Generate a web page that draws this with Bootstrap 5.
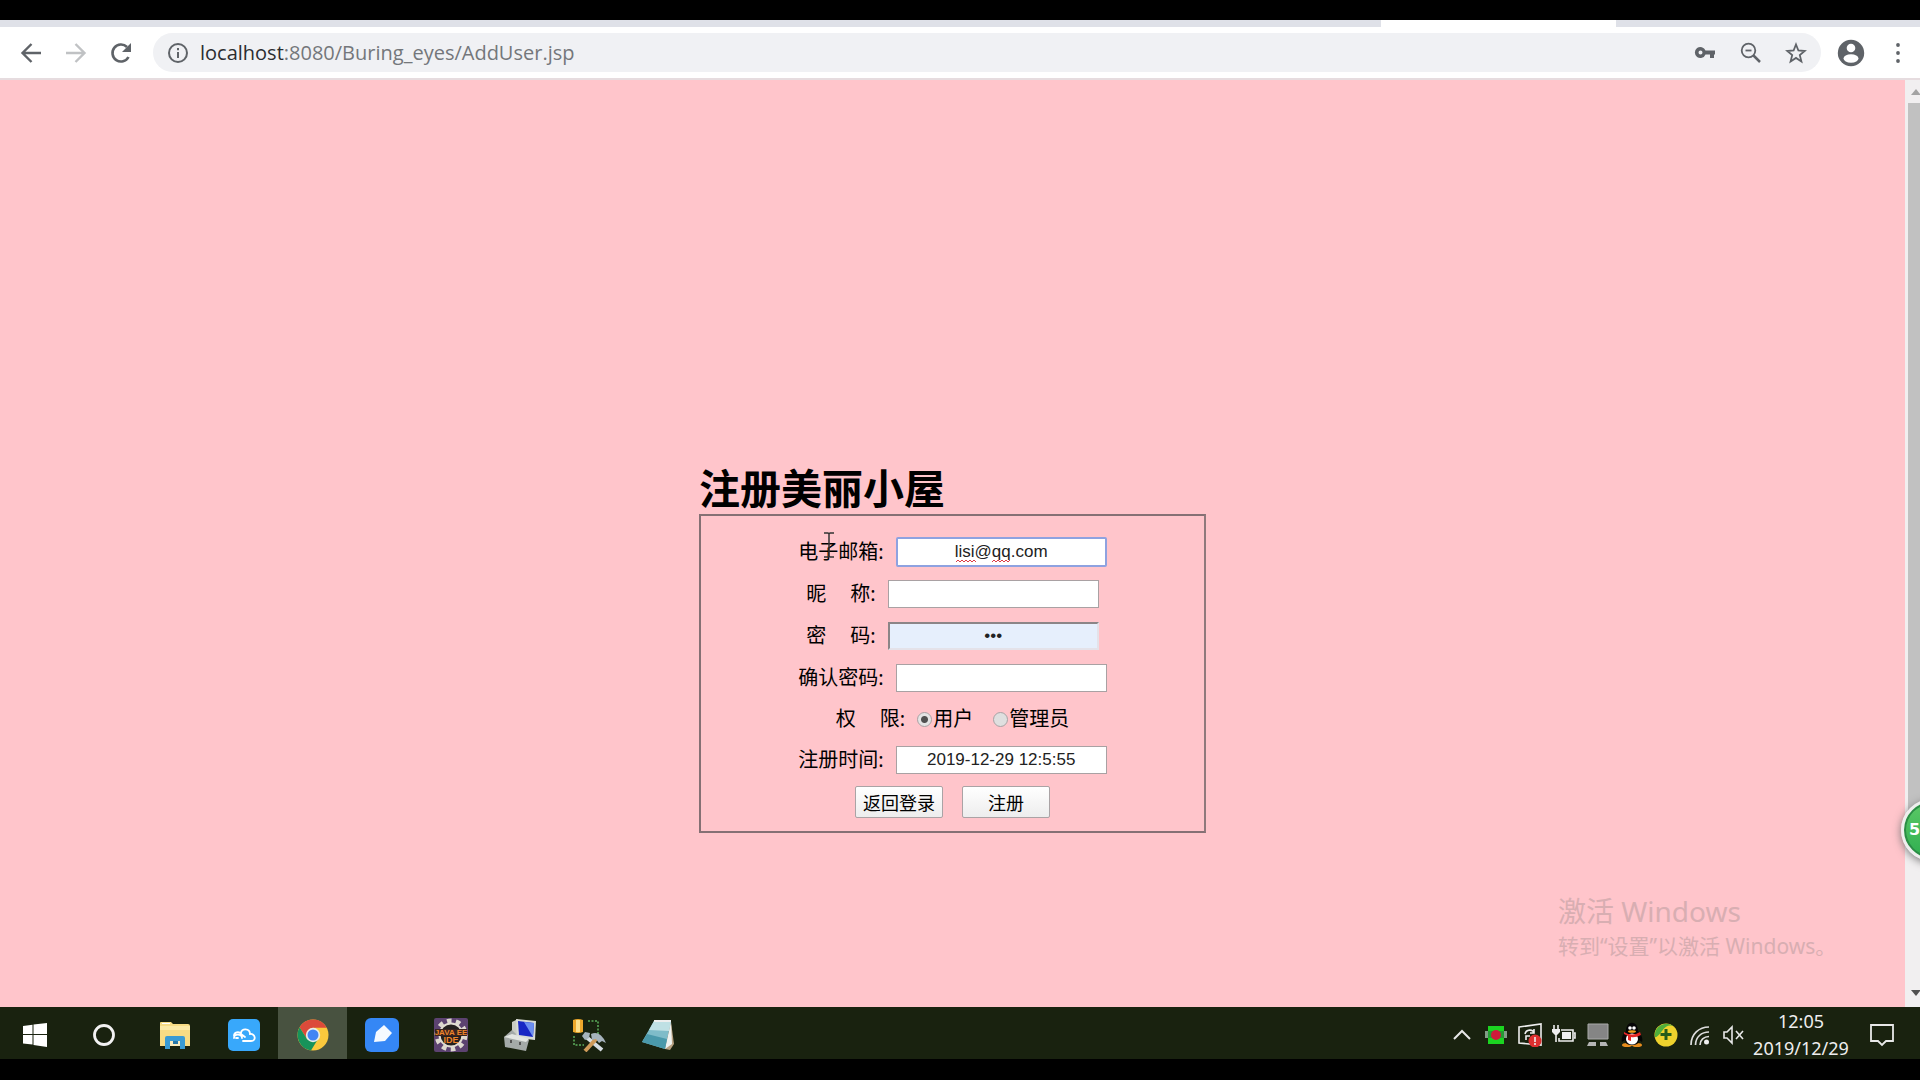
<!DOCTYPE html>
<html lang="zh-CN">
<head>
<meta charset="utf-8">
<meta name="viewport" content="width=device-width, initial-scale=1">
<title>注册美丽小屋</title>
<link href="https://cdn.jsdelivr.net/npm/bootstrap@5.3.0/dist/css/bootstrap.min.css" rel="stylesheet">
<style>
  body { background: #000; color: #000; font-family: "Liberation Sans", "Noto Sans CJK SC", sans-serif; padding: 20px 0 21px; overflow: hidden; }
  button { font-family: inherit; }
  svg { display: block; flex: none; }

  /* browser chrome */
  .tabstrip { height: 7px; background: #dfe1e8; padding-right: 304px; }
  .tab-active { width: 235px; background: #fff; }
  .toolbar { height: 53px; background: #fff; border-bottom: 2px solid #e6dcdf; padding: 0 17px 0 20px; }
  .tool { border: 0; background: none; padding: 0; color: #5f6368; }
  .nav-tools { gap: 23px; width: 133px; }
  .omnibox { height: 39px; background: #f0f1f4; border-radius: 20px; padding: 0 14px 0 15px; color: #5f6368; }
  .url { font: 20px/30px "Open Sans", "Noto Sans", sans-serif; color: #74777b; text-decoration: none; margin-left: 12px; }
  .url span { color: #2b2d30; }
  .url-tools { gap: 23px; }
  .menu-tool { margin-left: 22px; }

  /* page */
  .page-area { background: #ffc5cb; position: relative; }
  .signup { width: 507px; padding-bottom: 174px; margin-left: 699px; }
  .signup h1 { font: bold 41px/56px "Noto Sans CJK SC", sans-serif; margin: 0; }
  .frame { border: 2px solid; border-color: #857074 #8f797c #857074 #857074; padding: 15px 0 8px; }
  .line { height: 42px; font-size: 20px; line-height: 30px; font-family: "Noto Sans", "Noto Sans CJK SC", sans-serif; }
  .line.is-short { height: 40px; }
  .line > label, .line > .caption { margin-right: 12px; }
  .line > .choice { margin: 0 20px 0 1px; }
  .line > .choice:last-child { margin-right: 0; }
  .spread { display: inline-block; margin-right: 24px; }
  .line input[type=text], .line input[type=password] { width: 211px; height: 28px; border: 1px solid #a9a1a3; background: #fff; padding: 0 4px; font: 17px/20px "Liberation Sans", sans-serif; text-align: center; outline: 0; color: #222; }
  .line input.is-active { height: 30px; border: 2px solid #8ea2e0; border-radius: 2px; }
  .line input.is-filled { background: #e6effc; border: 2px solid; border-color: #8b8587 #e4e2e9 #e4e2e9 #8b8587; }
  .line input[type=radio] { appearance: none; width: 15px; height: 15px; margin: 0; border: 1px solid #a8a2a4; border-radius: 50%; background: #dfdfdf; }
  .line input[type=radio]:checked { background: radial-gradient(circle, #505050 0 3px, #e4e4e4 4px); }
  .squiggle { position: absolute; left: 60px; top: 22px; }
  .pushes { gap: 19px; }
  .push { width: 88px; height: 32px; border: 1px solid #aaa3a5; border-radius: 2px; background: linear-gradient(#fff, #ededed); font: 18px/24px "Noto Sans CJK SC", sans-serif; padding: 0; color: #000; }
  .ibeam { position: absolute; left: 822px; top: 452px; }
  .watermark { position: absolute; right: 64px; bottom: 46px; width: 298px; color: #d8aeb2; font-family: "Noto Sans", "Noto Sans CJK SC", sans-serif; }
  .watermark .big { font-size: 28px; line-height: 40px; }
  .watermark .sub { font-size: 21px; line-height: 30px; }

  .scroller { width: 15px; background: #f1eff0; }
  .thumb { height: 724px; margin: 4px 0 0 3px; background: #c1c1c1; }
  .down-arrow { margin-top: 162px; }
  .bubble { position: absolute; right: -43px; top: 719px; width: 62px; height: 62px; border-radius: 50%; border: 3px solid #eee; background: linear-gradient(#5bc966, #2fae50); box-shadow: 0 2px 8px #777, inset 0 0 0 2px #2b8c46; color: #fff; font: bold 16px/56px "DejaVu Sans", sans-serif; padding-left: 5px; }
  .clip { position: absolute; inset: 0; overflow: hidden; pointer-events: none; }

  /* task bar */
  .taskbar { height: 52px; background: #19220f; color: #eee; padding-left: 2px; }
  .slot { width: 69px; height: 52px; border: 0; background: none; padding: 4px 0 0; color: #fff; }
  .slot.is-open { background: #485240; }
  .tray { width: 34px; height: 52px; border: 0; background: none; padding: 4px 0 0; color: #e8e8e8; }
  .clock { width: 100px; padding-top: 4px; font: 18px/27px "Noto Sans", sans-serif; text-align: center; }
  .notify { width: 62px; margin-right: 7px; }
</style>
<script src="https://cdn.jsdelivr.net/npm/bootstrap@5.3.0/dist/js/bootstrap.bundle.min.js"></script>
</head>
<body class="d-flex flex-column vh-100">

<header>
  <div class="tabstrip d-flex justify-content-end"><div class="tab-active"></div></div>
  <div class="toolbar d-flex align-items-center">
    <div class="nav-tools d-flex align-items-center">
      <button class="tool" aria-label="后退"><svg width="22" height="22" viewBox="0 0 22 22" fill="none" stroke="currentColor" stroke-width="2.4"><path d="M21 11H3M11.500 2L2.500 11l9 9"/></svg></button>
      <button class="tool" aria-label="前进"><svg width="22" height="22" viewBox="0 0 22 22" fill="none" stroke="#c0c2c4" stroke-width="2.4"><path d="M1 11h18M10.500 2l9 9-9 9"/></svg></button>
      <button class="tool" aria-label="重新加载"><svg width="22" height="22" viewBox="0 0 22 22"><path d="M18.500 15A8.500 8.500 0 1 1 17 5" fill="none" stroke="currentColor" stroke-width="2.6"/><path d="M21 1v9h-9z" fill="currentColor"/></svg></button>
    </div>
    <div class="omnibox d-flex align-items-center flex-grow-1">
      <svg width="20" height="20" viewBox="0 0 20 20" fill="none" stroke="currentColor" stroke-width="2"><circle cx="10" cy="10" r="9"/><path d="M10 9v6M10 5v2.200"/></svg>
      <a class="url" href="#"><span>localhost</span>:8080/Buring_eyes/AddUser.jsp</a>
      <div class="url-tools d-flex align-items-center ms-auto">
        <button class="tool" aria-label="密码"><svg width="24" height="24" viewBox="0 0 24 24"><path d="M12.500 9.500a5.500 5.500 0 1 0 0 4H17V17h4v-3.500h1v-4zM7.500 13.500a2 2 0 1 1 0-4 2 2 0 0 1 0 4z" fill="currentColor"/></svg></button>
        <button class="tool" aria-label="缩放"><svg width="22" height="22" viewBox="0 0 22 22" fill="none" stroke="currentColor" stroke-width="1.8"><circle cx="8.500" cy="8.500" r="6.800"/><path d="M5.500 8.500h6"/><path d="M13.500 13.500l6.500 6.500" stroke-width="2.5"/></svg></button>
        <button class="tool" aria-label="收藏"><svg width="22" height="22" viewBox="0 0 22 22" fill="none" stroke="currentColor" stroke-width="1.8"><path d="M11 2.500l2.400 6 6.300.500-4.900 4.100 1.600 6.300-5.400-3.500-5.400 3.500 1.600-6.300L2.300 9l6.300-.500z"/></svg></button>
      </div>
    </div>
    <button class="tool ms-3" aria-label="用户"><svg width="28" height="28" viewBox="0 0 28 28"><circle cx="14" cy="14" r="13.200" fill="currentColor"/><circle cx="14" cy="9" r="4.300" fill="#fff"/><ellipse cx="14" cy="19.500" rx="7.500" ry="4.200" fill="#fff"/></svg></button>
    <button class="tool menu-tool" aria-label="菜单"><svg width="16" height="20" viewBox="0 0 16 20" fill="currentColor"><circle cx="11" cy="2" r="1.900"/><circle cx="11" cy="10" r="1.900"/><circle cx="11" cy="18" r="1.900"/></svg></button>
  </div>
</header>

<div class="page-area d-flex flex-grow-1">
  <main class="flex-grow-1 d-flex align-items-end">
    <form class="signup">
      <h1>注册美丽小屋</h1>
      <div class="frame">
        <div class="line d-flex align-items-center justify-content-center"><label for="mail">电子邮箱:</label><div class="position-relative d-flex"><input class="is-active" type="text" id="mail" value="lisi@qq.com"><svg class="squiggle" width="56" height="4" viewBox="0 0 56 4" fill="none" stroke="#dc3c46" stroke-width="1"><path d="M0 3l2-2 2 2 2-2 2 2 2-2 2 2 2-2 2 2 2-2 2 2M36 3l2-2 2 2 2-2 2 2 2-2 2 2 2-2 2 2 2-2"/></svg></div></div>
        <div class="line d-flex align-items-center justify-content-center"><label for="nick"><span class="spread">昵</span>称:</label><input type="text" id="nick"></div>
        <div class="line d-flex align-items-center justify-content-center"><label for="pass"><span class="spread">密</span>码:</label><input class="is-filled" type="password" id="pass" value="123"></div>
        <div class="line d-flex align-items-center justify-content-center"><label for="again">确认密码:</label><input type="password" id="again"></div>
        <div class="line is-short d-flex align-items-center justify-content-center"><span class="caption"><span class="spread">权</span>限:</span><input type="radio" name="role" id="user" checked><label for="user" class="choice">用户</label><input type="radio" name="role" id="admin"><label for="admin" class="choice">管理员</label></div>
        <div class="line d-flex align-items-center justify-content-center"><label for="time">注册时间:</label><input type="text" id="time" value="2019-12-29 12:5:55"></div>
        <div class="line pushes d-flex align-items-center justify-content-center"><button type="button" class="push">返回登录</button><button type="button" class="push">注册</button></div>
      </div>
    </form>
  </main>
  <div class="scroller">
    <svg width="15" height="19" viewBox="0 0 15 19"><path d="M6 15l5-6 4 5v1z" fill="#a3a3a3"/></svg>
    <div class="thumb"></div>
    <svg class="down-arrow" width="15" height="10" viewBox="0 0 15 10"><path d="M6 1h9v1l-4 5z" fill="#505050"/></svg>
  </div>
  <svg class="ibeam" width="14" height="26" viewBox="0 0 14 26" fill="none" stroke="#333" stroke-width="1.5"><path d="M2 1h4l1 1 1-1h4M7 2v22M2 25h4l1-1 1 1h4"/></svg>
  <div class="watermark"><div class="big">激活 Windows</div><div class="sub">转到“设置”以激活 Windows。</div></div>
  <div class="clip"><div class="bubble">5</div></div>
</div>

<footer class="taskbar d-flex align-items-center">
  <button class="slot d-flex align-items-center justify-content-center" aria-label="开始"><svg width="28" height="24" viewBox="0 0 28 24" fill="#fff"><path d="M0 3l9.500-1.300V11H0zM10.500 1.500L24 0v11H10.500zM0 12h9.500v9.500L0 20.500zM10.500 12H24v12l-13.500-2z"/></svg></button>
  <button class="slot d-flex align-items-center justify-content-center" aria-label="搜索"><svg width="26" height="24" viewBox="0 0 26 24"><circle cx="11" cy="12" r="9.500" fill="none" stroke="#f2f2f2" stroke-width="2.8"/></svg></button>
  <button class="slot d-flex align-items-center justify-content-center" aria-label="文件"><svg width="32" height="32" viewBox="0 0 32 32"><path d="M1 4q0-1 1-1h10l2 2h15q2 0 2 2v20H1z" fill="#f8dc85"/><path d="M1 7h30v4H1z" fill="#fdeaa6"/><path d="M3 4h8v1H3z" fill="#fff"/><path d="M6 30V19q0-2 2-2h16q2 0 2 2v11h-5v-7H11v7z" fill="#3a9bd4"/><path d="M11 22h10v5H11z" fill="#f8ebc0"/><path d="M14 22h5v3h-5z" fill="#2877a8"/></svg></button>
  <button class="slot d-flex align-items-center justify-content-center" aria-label="云"><svg width="32" height="32" viewBox="0 0 32 32"><rect width="32" height="32" rx="5" fill="#38a8fb"/><path d="M14 19c0-4-8-5-8 0M8 19h2M13 14c0-5 9-5 9 1 5-1 7 7 1 7H15M6 17c0-4 5-5 7-2l4 3" fill="none" stroke="#fff" stroke-width="1.8" stroke-linecap="round"/></svg></button>
  <button class="slot is-open d-flex align-items-center justify-content-center" aria-label="浏览器"><svg width="32" height="32" viewBox="0 0 32 32"><circle cx="16" cy="16" r="15.500" fill="#fbc93d"/><path d="M2.600 8.200A15.500 15.500 0 0 1 29.800 8.800H16L10 20z" fill="#dc4a3a"/><path d="M2.600 8.200L10 20l6 3 5-3-7 11.400A15.500 15.500 0 0 1 2.600 8.200z" fill="#17935a"/><circle cx="16" cy="16" r="7.200" fill="#e8eee8"/><circle cx="16" cy="16" r="5.500" fill="#4285f4"/></svg></button>
  <button class="slot d-flex align-items-center justify-content-center" aria-label="笔记"><svg width="34" height="34" viewBox="0 0 34 34"><rect width="34" height="34" rx="6" fill="#3587f5"/><path d="M9 24l2-10 8-7 8 8-7 8z" fill="#f5faff"/></svg></button>
  <button class="slot d-flex align-items-center justify-content-center" aria-label="Java EE IDE"><svg width="34" height="34" viewBox="0 0 34 34"><rect width="34" height="34" rx="2" fill="#5c4270"/><circle cx="17" cy="17" r="14" fill="none" stroke="#ddd8cf" stroke-width="5" stroke-dasharray="4.500 4.300"/><circle cx="17" cy="17" r="11.500" fill="#241f1e" stroke="#e2ddd3" stroke-width="2"/><path d="M1 11h32v7H1z" fill="#3a2420"/><g fill="#ee842a" font-family="Liberation Sans" font-weight="700" text-anchor="middle"><text x="17" y="17" font-size="8">JAVA EE</text><text x="17" y="25" font-size="9">IDE</text></g></svg></button>
  <button class="slot d-flex align-items-center justify-content-center" aria-label="计算机"><svg width="34" height="34" viewBox="0 0 34 34"><path d="M9 4l6-3v18l-6 1z" fill="#c9ccc4"/><path d="M13 1l20 2-1 19-18-2z" fill="#d7dbd5"/><path d="M15 3l16 2-1 14-14-2z" fill="#1827c4"/><path d="M21 4l10 1-1 14z" fill="#6c8ff0"/><path d="M1 19l8-7 4 4-2 3 15 3-3 11-21-4z" fill="#a4aaa8"/><path d="M1 19l8-3 17 5-3 3z" fill="#e3e6e2"/><path d="M8 22v3M17 24v3" stroke="#555" stroke-width="2"/></svg></button>
  <button class="slot d-flex align-items-center justify-content-center" aria-label="工具"><svg width="34" height="34" viewBox="0 0 34 34"><path d="M16 3h10v13M2 18v9h10" fill="none" stroke="#5cae5c" stroke-width="1.5" stroke-dasharray="2 1.500"/><path d="M1 2q5-2 10 0v12q-5 2-10 0z" fill="#eea82c"/><path d="M4 2h4v12H4z" fill="#ffe08a"/><path d="M13 18l17 14" stroke="#d6dde2" stroke-width="4"/><path d="M13 33l12-13" stroke="#cf9a59" stroke-width="4"/><path d="M10 18l3-4 5 1-1 5-4 2zM19 16q9-4 15 9l-4-2-3 2-3-4-4 1z" fill="#a6b3bd"/></svg></button>
  <button class="slot d-flex align-items-center justify-content-center" aria-label="记事本"><svg width="34" height="34" viewBox="0 0 34 34"><path d="M30 4l3 22-4 6-5-1z" fill="#b7a081"/><path d="M13 3l17 1-6 27L1 24z" fill="#7fbcc9"/><path d="M13 3l17 1-2 9-20-1z" fill="#bfe0e4"/><path d="M30 4l1 22-7 5z" fill="#eef1f0"/><path d="M6 16l20 5-2 10L1 24z" fill="#4a99ab"/><path d="M13 3h17" stroke="#eee" stroke-width="2"/></svg></button>

  <button class="tray ms-auto d-flex align-items-center justify-content-center" aria-label="更多"><svg width="20" height="20" viewBox="0 0 20 20" fill="none" stroke="currentColor" stroke-width="2"><path d="M2 14l8-8 8 8"/></svg></button>
  <button class="tray d-flex align-items-center justify-content-center" aria-label="录屏"><svg width="22" height="20" viewBox="0 0 22 20"><path d="M3 1h16v18H3z" fill="#1bd321"/><path d="M0 6h22v7H0z" fill="#829c86"/><path d="M3 6h16v7H3z" fill="#249a34"/><circle cx="11" cy="10" r="5" fill="#ce1a3a"/></svg></button>
  <button class="tray d-flex align-items-center justify-content-center" aria-label="更新"><svg width="24" height="24" viewBox="0 0 24 24" fill="none" stroke="#eee" stroke-width="1.6"><path d="M1 4l22-3v21L1 20zM7 11c1-5 8-5 9-1M16 6v4h-4M8 17v-4h4"/><circle cx="17" cy="18" r="6.500" fill="#dd2f2f" stroke="none"/><path d="M17 14v5M17 20v2"/></svg></button>
  <button class="tray d-flex align-items-center justify-content-center" aria-label="电源"><svg width="24" height="22" viewBox="0 0 24 22" fill="none" stroke="#eee" stroke-width="1.6"><path d="M9 6h12v11H7v-3M22 9h1v5h-1M4 10v8M2 1v4M6 1v4"/><path d="M10 8h9v7h-9zM0 5h8v3l-3 3H3L0 8z" fill="#eee" stroke="none"/></svg></button>
  <button class="tray d-flex align-items-center justify-content-center" aria-label="网络"><svg width="22" height="24" viewBox="0 0 22 24"><path d="M1 1h20v15H1z" fill="#858585" stroke="#aaa"/><path d="M2 19h7v4H0zM13 19h6l2 4h-8z" fill="#b5b5b5"/></svg></button>
  <button class="tray d-flex align-items-center justify-content-center" aria-label="QQ"><svg width="22" height="26" viewBox="0 0 22 26"><ellipse cx="6" cy="23" rx="5" ry="2" fill="#e88d1d"/><ellipse cx="16" cy="23" rx="5" ry="2" fill="#e88d1d"/><path d="M5 9c0-11 12-11 12 0 4 4 5 8 4 11l-3-2c0 3-2 5-7 5s-7-2-7-5l-3 2C0 17 1 13 5 9z" fill="#050505"/><ellipse cx="11" cy="17" rx="6" ry="5.500" fill="#fff"/><path d="M3 10q8 5 16 0l1 3q-6 3-10 2v4l-3-1v-4l-4-2z" fill="#e32724"/><circle cx="9" cy="6" r="1.800" fill="#fff"/><circle cx="13" cy="6" r="1.800" fill="#fff"/><ellipse cx="11" cy="9.500" rx="4" ry="1.300" fill="#f3a01d"/></svg></button>
  <button class="tray d-flex align-items-center justify-content-center" aria-label="安全卫士"><svg width="24" height="24" viewBox="0 0 24 24"><circle cx="12" cy="12" r="11.500" fill="#efd22d"/><path d="M1 14A11.500 11.500 0 0 1 19 3Q13 1 8 8T1 14z" fill="#4fae3b"/><path d="M12 6v11M6.500 11.500h11" stroke="#245c1a" stroke-width="3"/></svg></button>
  <button class="tray d-flex align-items-center justify-content-center" aria-label="无线网络"><svg width="20" height="20" viewBox="0 0 20 20" fill="none" stroke="#ddd" stroke-width="1.7"><path d="M1 20C1 9 9 2 19 2M5.500 20c0-8 6-13 13.500-13M10 20c0-5 4-8.500 9-8.500"/><circle cx="16.500" cy="17" r="2.500" fill="#eee" stroke="none"/></svg></button>
  <button class="tray d-flex align-items-center justify-content-center" aria-label="静音"><svg width="22" height="20" viewBox="0 0 22 20" fill="none" stroke="currentColor" stroke-width="1.6"><path d="M1 7h3l5-5v16l-5-5H1zM13 6l7 8M20 6l-7 8"/></svg></button>
  <div class="clock">12:05<br>2019/12/29</div>
  <button class="tray notify d-flex align-items-center justify-content-center" aria-label="通知"><svg width="24" height="24" viewBox="0 0 24 24" fill="none" stroke="currentColor" stroke-width="1.8"><path d="M1 2h22v16h-7l-4 4-4-4H1z"/></svg></button>
</footer>
</body>
</html>
